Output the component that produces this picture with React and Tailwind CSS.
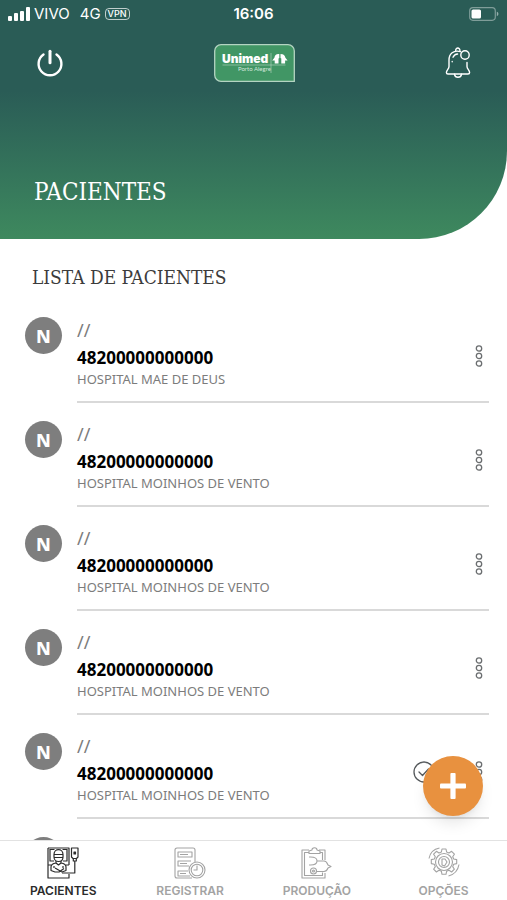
import { clsx } from 'clsx';

const patients = [
    { id: 1, initial: 'N', date: '//', number: '48200000000000', hospital: 'HOSPITAL MAE DE DEUS' },
    { id: 2, initial: 'N', date: '//', number: '48200000000000', hospital: 'HOSPITAL MOINHOS DE VENTO' },
    { id: 3, initial: 'N', date: '//', number: '48200000000000', hospital: 'HOSPITAL MOINHOS DE VENTO' },
    { id: 4, initial: 'N', date: '//', number: '48200000000000', hospital: 'HOSPITAL MOINHOS DE VENTO' },
    { id: 5, initial: 'N', date: '//', number: '48200000000000', hospital: 'HOSPITAL MOINHOS DE VENTO', checked: true },
    { id: 6 },
];

// Status bar icons
const SignalIcon = () => (
    <svg width="22" height="14" viewBox="0 0 22 14" fill="currentColor" aria-hidden="true">
        <rect x="0" y="9" width="4" height="5" rx="1" />
        <rect x="6" y="6" width="4" height="8" rx="1" />
        <rect x="12" y="4" width="4" height="10" rx="1" />
        <rect x="18" y="0" width="4" height="14" rx="1" />
    </svg>
);

const BatteryIcon = () => (
    <svg width="30" height="14" viewBox="0 0 30 14" fill="none" aria-hidden="true">
        <rect x="0.7" y="0.7" width="25.6" height="12.6" rx="3.2" stroke="#fff" strokeOpacity="0.4" strokeWidth="1.2" />
        <rect x="2.5" y="2.5" width="9.5" height="9" rx="1.6" fill="#fff" />
        <path d="M27.8 4.8c1 .3 1.6 1.2 1.6 2.2s-.6 1.9-1.6 2.2z" fill="#fff" fillOpacity="0.5" />
    </svg>
);

// Header icons
const PowerIcon = () => (
    <svg width="28" height="28" viewBox="0 0 28 28" fill="none" stroke="currentColor" strokeLinecap="round" aria-hidden="true">
        <path d="M7.5 5.5A11.4 11.4 0 1 0 20.5 5.5" strokeWidth="2.4" />
        <path d="M14 2.3v11.5" strokeWidth="3" />
    </svg>
);

const BellIcon = () => (
    <svg width="26" height="32" viewBox="0 0 26 32" fill="none" stroke="currentColor" strokeWidth="1.4" strokeLinecap="round" strokeLinejoin="round" aria-hidden="true">
        <path d="M15.5 4.6C8.5 2.6 4 7 4 13v6.5c0 2.5-2.6 3.7-2.6 6 0 1 .6 1.5 1.6 1.5h20c1 0 1.6-.5 1.6-1.5 0-2.3-2.6-3.5-2.6-6v-4" />
        <path d="M10.7 3.6c-.2-3.4 4.4-3.4 4.2 0" />
        <circle cx="20" cy="8" r="4.2" />
        <path d="M9.5 27.3c.6 4 6.4 4 7 0M8 10.2c1-2 2.6-3 4.6-3.2M7.2 14.4v.4" />
    </svg>
);

const UnimedLogo = () => (
    <svg width="81" height="38" viewBox="0 0 81 38" role="img" aria-label="Unimed Porto Alegre">
        <path d="M7 .7h67a6.3 6.3 0 0 1 6.3 6.3v30.3H7A6.3 6.3 0 0 1 .7 31V7A6.3 6.3 0 0 1 7 .7z" fill="#419665" stroke="#b4d4c2" strokeWidth="1.3" />
        <text x="8" y="19" fill="#fff" className="font-['Inter',sans-serif] text-[12px] font-black">Unimed</text>
        <text x="24" y="27" fill="#d4e8dc" className="font-['Lato',sans-serif] text-[6px]">Porto Alegre</text>
        <path d="M8.5 21h63M57 9v20" stroke="#a6cfb7" strokeWidth="0.7" />
        <path d="M64.5 10c-2.6 0-3.8 1.6-4.1 3.7l-2.2 2.8h2.5v3h3.8v-5l.8-.5V10zM66.5 10v4l.8.5v5h3.8v-3h2.5l-2.2-2.8c-.4-2.1-1.7-3.7-4.9-3.7z" fill="#fff" />
    </svg>
);

// List icons
const MoreIcon = () => (
    <svg width="8" height="24" viewBox="0 0 8 24" fill="none" stroke="currentColor" strokeWidth="1.3" aria-hidden="true">
        <circle cx="4" cy="4.5" r="2.7" />
        <circle cx="4" cy="12" r="2.7" />
        <circle cx="4" cy="19.5" r="2.7" />
    </svg>
);

const CheckIcon = () => (
    <svg width="22" height="22" viewBox="0 0 22 22" fill="none" stroke="currentColor" strokeWidth="1.3" strokeLinecap="round" strokeLinejoin="round" aria-hidden="true">
        <circle cx="11" cy="11" r="10" />
        <path d="M6 11l3.5 3.5 6-6.5" />
    </svg>
);

const PlusIcon = () => (
    <svg width="26" height="26" viewBox="0 0 26 26" fill="currentColor" aria-hidden="true">
        <rect x="0" y="10.4" width="26" height="5.2" rx="1" />
        <rect x="10.4" y="0" width="5.2" height="26" rx="1" />
    </svg>
);

// Tab bar icons
const PatientIcon = () => (
    <svg width="32" height="32" viewBox="0 0 32 32" fill="none" stroke="currentColor" strokeWidth="1.2" strokeLinejoin="round" aria-hidden="true">
        <path d="M1 1h21v17M1 1v30h21v-4M3 2v12h4M20 2v12h-4M3.5 2.5h4M15.5 2.5h4M1 18h3M19 18h3" />
        <path d="M7 7.5C7 1 16 1 16 7.5V10c0 6-9 6-9 0zM7 7.5h9M7.5 10.5h8" />
        <path d="M9 14v2l2.5 2 2.5-2v-2M9 16c-4 .5-5 1.5-5 4v3.5L8 25h4l5-3.5M14 16c4 .5 5 1.5 5 4v3.5L15 25l-7-4M7 19v2M16 19v2" />
        <path d="M24.5 1H31v9l-1.5 1.5H26L24.5 10zM26.3 11.5V14h3v-2.5M27.8 14v12H15" />
        <path d="M27 5h1.5v2H27z" fill="currentColor" />
    </svg>
);

const RegisterIcon = () => (
    <svg width="32" height="32" viewBox="0 0 32 32" fill="none" stroke="currentColor" strokeWidth="1.1" strokeLinejoin="round" aria-hidden="true">
        <path d="M18 31H3a2 2 0 0 1-2-2V3a2 2 0 0 1 2-2h16a2 2 0 0 1 2 2v12" />
        <path d="M4 5h14v5H4zM17 14H4v5h11M14 24H4v5h12M6 7.5h8M6 16.5h7M6 26.5h6" />
        <circle cx="23" cy="23" r="8" />
        <circle cx="23" cy="23" r="5.8" />
        <path d="M23 18.5V23h-3.5" />
    </svg>
);

const ProductionIcon = () => (
    <svg width="32" height="32" viewBox="0 0 32 32" fill="none" stroke="currentColor" strokeWidth="1.1" strokeLinejoin="round" aria-hidden="true">
        <path d="M8 3H1v28h23v-5M18 3h6v10M8 5.5H3.5v23h18v-3M19 5.5h2.5V13" />
        <path d="M8 6.5V4l3-1c0-3 5-3 5 0l3 1v2.5z" />
        <path d="M8 10h1.5c4 0 6.5 1 6.5 4s-2.5 4-6.5 4H8M16 14h7c2.5 0 3 1.5 4 4l3 1.5-3 1.5c-1 2.5-1.5 3.5-4 3.5h-7" />
        <circle cx="12.5" cy="24" r="3" />
        <circle cx="12.5" cy="24" r="1" />
    </svg>
);

const OptionsIcon = () => (
    <svg width="34" height="32" viewBox="0 0 34 32" fill="none" stroke="currentColor" strokeWidth="1.1" strokeLinejoin="round" aria-hidden="true">
        <path d="M15 2h4l.6 3 2.4 1 2.6-1.7 2.8 2.8-1.7 2.6 1 2.3 3 .6v4l-3 .6-1 2.4 1.7 2.6-2.8 2.8-2.6-1.7-2.4 1-.6 3h-4l-.6-3-2.4-1-2.6 1.7-2.8-2.8 1.7-2.6-1-2.4-3-.6v-4l3-.6 1-2.3-1.7-2.6 2.8-2.8L12 6l2.4-1z" />
        <circle cx="17" cy="15" r="8.5" />
        <circle cx="17" cy="15" r="5.5" />
        <path d="M15 18v-6h3l2 3-2.5 4zM2 11.5C3 6 7 2 12.5 1M32 17.5c-1 6-5 10-10.5 11.5" />
    </svg>
);

const tabs = [
    { label: 'PACIENTES', icon: PatientIcon, active: true },
    { label: 'REGISTRAR', icon: RegisterIcon },
    { label: 'PRODUÇÃO', icon: ProductionIcon },
    { label: 'OPÇÕES', icon: OptionsIcon },
];

const StatusBar = () => (
    <div className="grid h-7 grid-cols-3 items-center px-2 font-['Inter',sans-serif] text-[15px]">
        <div className="flex items-center gap-1">
            <SignalIcon />
            <span>VIVO</span>
            <span className="ml-1.5">4G</span>
            <span className="rounded border border-white/70 px-0.5 text-[9px] leading-[10px] font-medium">VPN</span>
        </div>
        <span className="text-center font-semibold">16:06</span>
        <div className="flex justify-end">
            <BatteryIcon />
        </div>
    </div>
);

const Header = () => (
    <header className="shrink-0 rounded-br-[88px] bg-linear-to-b from-[#2a5c56] from-38% to-[#3e895e] text-white">
        <StatusBar />
        <div className="flex items-center justify-between px-9 pt-4">
            <button type="button" aria-label="Sair">
                <PowerIcon />
            </button>
            <UnimedLogo />
            <button type="button" aria-label="Notificações">
                <BellIcon />
            </button>
        </div>
        <h1 className="px-[34px] pt-[94px] pb-[31px] font-['DejaVu_Serif_Condensed','DejaVu_Serif',serif] text-2xl">
            PACIENTES
        </h1>
    </header>
);

const PatientRow = ({ patient }) => (
    <li className="flex gap-[15px] pr-[18px] pl-[25px]">
        <span className="mt-[18px] flex size-[37px] shrink-0 items-center justify-center rounded-full bg-[#7e7e7e] text-lg font-extrabold text-white">
            {patient.initial}
        </span>
        <div className="flex h-26 flex-1 items-center border-b-2 border-[#d9d9d9] text-[#7c7c7c]">
            <div className="flex-1 pt-1">
                <p className="text-lg leading-7">{patient.date}</p>
                <p className="pt-0.5 text-[17px] leading-6 font-bold text-black">{patient.number}</p>
                <p className="text-[13px] leading-[18px]">{patient.hospital}</p>
            </div>
            {patient.checked && (
                <span className="mt-3 mr-10 text-[#55595c]">
                    <CheckIcon />
                </span>
            )}
            <button type="button" aria-label="Mais ações" className="mt-3 mr-[6px] text-[#6b6e70]">
                <MoreIcon />
            </button>
        </div>
    </li>
);

const TabBar = () => (
    <nav className="grid h-15 shrink-0 grid-cols-4 border-t border-[#e2e2e2] bg-white font-['Inter',sans-serif]">
        {tabs.map(({ label, icon: Icon, active }) => (
            <a
                key={label}
                href="#"
                className={clsx(
                    'flex flex-col items-center gap-1 pt-1.5 text-xs font-semibold',
                    active ? 'text-[#2b2b2b]' : 'text-[#a3a3a3]'
                )}
            >
                <Icon />
                {label}
            </a>
        ))}
    </nav>
);

const App = () => (
    <div className="flex h-screen flex-col bg-white font-['Noto_Sans',sans-serif]">
        <Header />
        <main className="relative flex min-h-0 flex-1 flex-col">
            <h2 className="px-8 pt-6 pb-2 font-['DejaVu_Serif_Condensed','DejaVu_Serif',serif] text-[19px] leading-7 text-[#3c3c3c]">
                LISTA DE PACIENTES
            </h2>
            <ul className="min-h-0 flex-1 overflow-hidden">
                {patients.map((patient) => (
                    <PatientRow key={patient.id} patient={patient} />
                ))}
            </ul>
            <button
                type="button"
                aria-label="Adicionar paciente"
                className="absolute right-6 bottom-6 flex size-15 items-center justify-center rounded-full bg-[#e8913f] text-white shadow-lg"
            >
                <PlusIcon />
            </button>
        </main>
        <TabBar />
    </div>
);

export default App;
